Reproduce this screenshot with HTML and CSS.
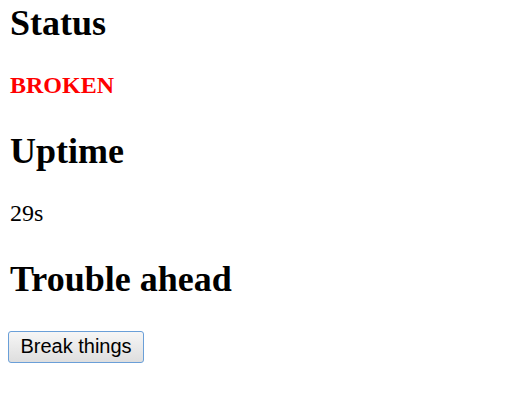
FILE: index.html
```html
<!DOCTYPE html>
<html>
<head>
<meta charset="utf-8">
<link rel="stylesheet" href="styles.css">
</head>
<body>
<h2 class="title first">Status</h2>
<p class="text"><strong class="broken">BROKEN</strong></p>
<h2 class="title">Uptime</h2>
<p class="text">29s</p>
<h2 class="title">Trouble ahead</h2>
<button class="btn">Break things</button>
</body>
</html>
```
FILE: styles.css
```css
body {
  margin: 0 8px;
  font-family: "Liberation Serif", "Times New Roman", serif;
  font-size: 24px;
  color: #000;
  background: #fff;
}
.title {
  font-size: 36px;
  font-weight: bold;
  margin: 31.5px 0 27.5px;
  padding-left: 2px;
}
.title.first {
  margin-top: 2px;
}
.text {
  margin: 0;
  padding-left: 2px;
}
.broken {
  color: #ff0000;
}
.btn {
  display: block;
  margin: 30.5px 0 0;
  font-family: "Liberation Sans", Arial, sans-serif;
  font-size: 20px;
  width: 136px;
  height: 32px;
  padding: 0;
  border: 1px solid #6a9fd8;
  border-radius: 3px;
  background: linear-gradient(#f6f6f6, #dedede);
  color: #000;
}
```
